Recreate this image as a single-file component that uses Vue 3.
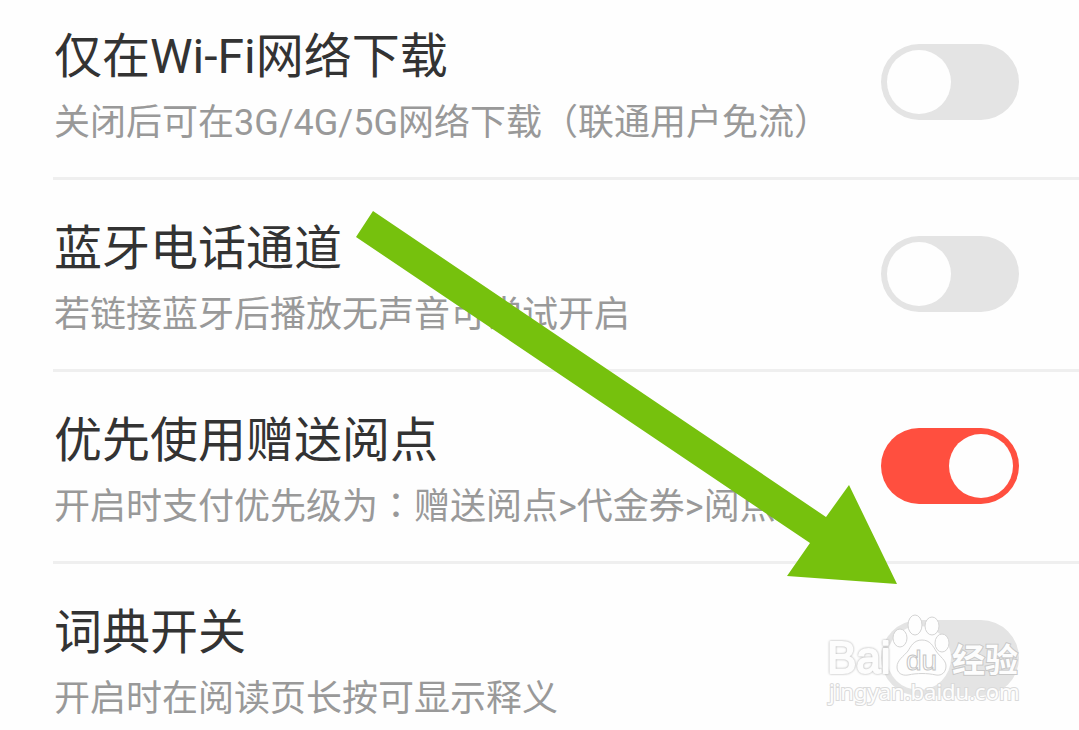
<script setup>
import { reactive } from 'vue'

const settings = reactive([
  { id: 'wifi', title: '仅在Wi-Fi网络下载', parts: ['关闭后可在3G/4G/5G网络下载（联通用户免流）'], on: false },
  { id: 'bluetooth', title: '蓝牙电话通道', parts: ['若链接蓝牙后播放无声音可尝试开启'], on: false },
  { id: 'points', title: '优先使用赠送阅点', parts: ['开启时支付优先级为', '：', '赠送阅点>代金券>阅点'], on: true },
  { id: 'dictionary', title: '词典开关', parts: ['开启时在阅读页长按可显示释义'], on: false }
])
</script>

<template>
  <main class="page">
    <ul class="list">
      <li v-for="s in settings" :key="s.id" class="row">
        <div class="copy">
          <label class="title" :for="s.id">{{ s.title }}</label>
          <p class="desc" :id="s.id + '-desc'"><span v-for="(p, i) in s.parts" :key="i" :class="{ colon: p === '：' }">{{ p }}</span></p>
        </div>
        <input :id="s.id" v-model="s.on" class="switch" type="checkbox" role="switch" :aria-describedby="s.id + '-desc'" />
      </li>
    </ul>

    <svg class="arrow" viewBox="356 211 541 373" aria-hidden="true">
      <path d="M373 211 826 517 849 485 897 584 787 576 810 543 356 237Z" />
    </svg>

    <svg class="mark" viewBox="820 610 210 100" aria-hidden="true">
      <g class="shape">
        <ellipse cx="900" cy="638" rx="7" ry="9" />
        <ellipse cx="915" cy="625" rx="7" ry="10" />
        <ellipse cx="932" cy="626" rx="7" ry="9" />
        <ellipse cx="942" cy="643" rx="7" ry="9" />
        <path d="M922 640C914 640 911 646 908 651C904 656 897 660 897 667C897 673 902 676 908 675C917 673 927 673 936 675C942 676 946 672 946 666C946 660 940 657 936 651C933 646 930 640 922 640Z" />
      </g>
      <text class="latin" x="827" y="673">Bai</text>
      <text class="du" x="906" y="670">du</text>
      <text class="cjk" x="952" y="672">经验</text>
      <text class="url" x="829" y="700">jingyan.baidu.com</text>
    </svg>
  </main>
</template>

<style>
body {
  margin: 0;
  background: #fefefe;
}
</style>

<style scoped>
.page {
  position: relative;
  min-height: 100vh;
  overflow: hidden;
  box-sizing: border-box;
  font-family: Roboto, "Noto Sans CJK SC", sans-serif;
  color: #333;
}
.list {
  list-style: none;
  margin: 0;
  padding: 0 0 0 53px;
}
.row {
  display: flex;
  align-items: center;
  justify-content: space-between;
  padding: 28px 60px 29px 0;
  border-bottom: 3px solid #efefef;
}
.row:first-child {
  padding-top: 16px;
}
.row:last-child {
  padding-bottom: 0;
  border-bottom: 0;
}
.copy {
  padding-left: 1px;
}
.title {
  display: block;
  font-size: 48px;
  line-height: 82px;
}
.desc {
  margin: 0;
  font-size: 36px;
  line-height: 50px;
  color: #999;
}
.colon {
  font-family: "Noto Sans CJK TC", sans-serif;
  line-height: 1;
}
.switch {
  appearance: none;
  flex: none;
  display: flex;
  box-sizing: border-box;
  width: 138px;
  height: 76px;
  margin: 0;
  padding: 6px;
  border-radius: 38px;
  background: #e4e4e4;
  cursor: pointer;
}
.switch::before {
  content: "";
  width: 64px;
  height: 64px;
  border-radius: 50%;
  background: #fefefe;
}
.switch:checked {
  justify-content: flex-end;
  background: #ff4f3f;
}
.arrow {
  position: absolute;
  left: 356px;
  top: 211px;
  width: 541px;
  height: 373px;
  fill: #76c10d;
  pointer-events: none;
}
.mark {
  position: absolute;
  right: 49px;
  top: 610px;
  width: 210px;
  height: 100px;
  pointer-events: none;
}
.shape {
  fill: #fefefe;
  stroke: #d4d4d4;
  stroke-width: 1;
}
.latin {
  font: 44px "Liberation Sans", sans-serif;
  fill: #fdfdfd;
  stroke: #fdfdfd;
  stroke-width: 2;
  stroke-linejoin: round;
  filter: drop-shadow(0 0 1px #aaa);
}
.cjk {
  font: 700 33px "Noto Sans CJK SC", sans-serif;
  fill: #fdfdfd;
  stroke: #c8c8c8;
  stroke-width: 2;
  paint-order: stroke;
}
.url {
  font: 22px "Noto Sans", sans-serif;
  fill: #fdfdfd;
  stroke: #dadada;
  stroke-width: 2;
  paint-order: stroke;
}
.du {
  font: 28px "Liberation Sans", sans-serif;
  fill: #fefefe;
  stroke: #c4c4c4;
  stroke-width: 1;
}
</style>
